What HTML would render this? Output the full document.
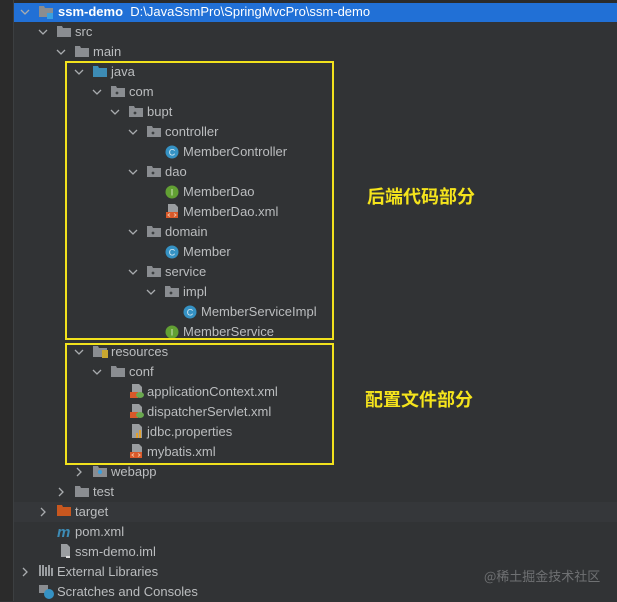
<!DOCTYPE html>
<html><head><meta charset="utf-8"><style>
body{margin:0;width:617px;height:601px;background:#313335;overflow:hidden;position:relative;font-family:"Liberation Sans","Noto Sans CJK SC",sans-serif;font-size:13px;color:#bbbdbf}
.strip{position:absolute;left:0;top:0;width:13px;height:601px;background:#2b2b2b;border-right:1px solid #3c3f41}
.top{position:absolute;left:0;top:0;width:617px;height:3px;background:#2b2b2b}
.sel{position:absolute;left:14px;top:3px;width:603px;height:19px;background:#2170d6}
.hl{position:absolute;left:14px;top:502px;width:603px;height:20px;background:#35373a}
.r{position:absolute;height:20px;line-height:20px;white-space:nowrap}
.box{position:absolute;border:2px solid #f2e21d;box-sizing:border-box}
.lab{position:absolute;color:#f5e41c;font-weight:bold;font-size:18px;line-height:24px;font-family:"Noto Sans CJK SC",sans-serif}
.wm{position:absolute;left:484px;top:566px;color:#6f7173;font-size:13px;font-family:"Noto Sans CJK SC",sans-serif}
</style></head><body>
<div class="top"></div><div class="strip"></div>
<div class="sel"></div><div class="hl"></div>
<svg width="617" height="601" style="position:absolute;left:0;top:0">
<defs>
<g id="dn"><path d="M0 0 L4 4 L8 0" fill="none" stroke="#a9acaf" stroke-width="1.3"/></g>
<g id="rt"><path d="M0 0 L4 4 L0 8" fill="none" stroke="#a9acaf" stroke-width="1.3"/></g>
<g id="fd"><path d="M0 1 h5 l1 2 h8 v9 h-14z" fill="#8a8d91"/></g>
<g id="pk"><path d="M0 1 h5 l1 2 h8 v9 h-14z" fill="#8a8d91"/><circle cx="6" cy="8" r="1.4" fill="#3c3f41"/></g>
<g id="cl"><circle cx="7" cy="7" r="6.5" fill="#3592c4"/><text x="7" y="10.5" font-size="9" text-anchor="middle" fill="#d8e8f0" font-family="Liberation Sans">C</text></g>
<g id="in"><circle cx="7" cy="7" r="6.5" fill="#62a033"/><text x="7" y="10.5" font-size="9" text-anchor="middle" fill="#e0f0d0" font-family="Liberation Sans">I</text></g>
<g id="xm"><path d="M3 0 h7 l3 3 v6 h-10z" fill="#9a9da0"/><rect x="1" y="8" width="12" height="6" fill="#d9592a"/><path d="M5 9.5 l-2 1.5 l2 1.5 M9 9.5 l2 1.5 l-2 1.5" stroke="#f0c0a0" fill="none"/></g>
<g id="sx"><path d="M3 0 h7 l3 3 v6 h-10z" fill="#9a9da0"/><rect x="1" y="8" width="8" height="6" fill="#d9592a"/><ellipse cx="11" cy="11" rx="4" ry="3" fill="#6aa84f"/></g>
</defs>
<use href="#dn" x="21" y="10"/><use href="#dn" x="39" y="30"/><use href="#dn" x="57" y="50"/>
<use href="#dn" x="75" y="70"/><use href="#dn" x="93" y="90"/><use href="#dn" x="111" y="110"/>
<use href="#dn" x="129" y="130"/><use href="#dn" x="129" y="170"/><use href="#dn" x="129" y="230"/>
<use href="#dn" x="129" y="270"/><use href="#dn" x="147" y="290"/>
<use href="#dn" x="75" y="350"/><use href="#dn" x="93" y="370"/>
<use href="#rt" x="77" y="468"/><use href="#rt" x="59" y="488"/><use href="#rt" x="41" y="508"/><use href="#rt" x="23" y="568"/>
<use href="#fd" x="39" y="5"/><rect x="47" y="13" width="6" height="6" fill="#3aa0e0"/>
<use href="#fd" x="57" y="25"/><use href="#fd" x="75" y="45"/>
<path d="M93 66 h5 l1 2 h8 v9 h-14z" fill="#3d8cb6"/>
<use href="#pk" x="111" y="85"/><use href="#pk" x="129" y="105"/><use href="#pk" x="147" y="125"/>
<use href="#cl" x="165" y="145"/>
<use href="#pk" x="147" y="165"/><use href="#in" x="165" y="185"/><use href="#xm" x="165" y="204"/>
<use href="#pk" x="147" y="225"/><use href="#cl" x="165" y="245"/>
<use href="#pk" x="147" y="265"/><use href="#pk" x="165" y="285"/><use href="#cl" x="183" y="305"/><use href="#in" x="165" y="325"/>
<use href="#fd" x="93" y="345"/><rect x="102" y="350" width="6" height="8" fill="#c9a830"/>
<use href="#fd" x="111" y="365"/>
<use href="#sx" x="129" y="384"/><use href="#sx" x="129" y="404"/>
<path d="M132 424 h7 l3 3 v11 h-10z" fill="#9a9da0"/><rect x="136" y="433" width="2" height="5" fill="#e0a030"/><rect x="139" y="430" width="2" height="8" fill="#e0a030"/>
<use href="#xm" x="129" y="444"/>
<use href="#fd" x="93" y="465"/><circle cx="100" cy="472" r="2" fill="#3aa0e0"/>
<use href="#fd" x="75" y="485"/>
<path d="M57 505 h5 l1 2 h8 v9 h-14z" fill="#c8571f"/>
<text x="57" y="537" font-size="15" font-style="italic" font-weight="bold" fill="#3d8cb6" font-family="Liberation Sans">m</text>
<path d="M61 544 h6 l3 3 v10 h-9z" fill="#9a9da0"/><rect x="66" y="556" width="4" height="2" fill="#ddd"/>
<g fill="#9a9da0"><rect x="39" y="565" width="2" height="11"/><rect x="42" y="565" width="2" height="11"/><rect x="45" y="567" width="2" height="9"/><rect x="48" y="565" width="2" height="11"/><rect x="51" y="568" width="2" height="8"/></g>
<rect x="39" y="585" width="9" height="8" fill="#8a8d91"/><circle cx="49" cy="594" r="5" fill="#3592c4"/>
</svg>
<div class="r" style="left:58px;top:2px;color:#fff"><b>ssm-demo</b>&nbsp; D:\JavaSsmPro\SpringMvcPro\ssm-demo</div>
<div class="r" style="left:75px;top:22px">src</div>
<div class="r" style="left:93px;top:42px">main</div>
<div class="r" style="left:111px;top:62px">java</div>
<div class="r" style="left:129px;top:82px">com</div>
<div class="r" style="left:147px;top:102px">bupt</div>
<div class="r" style="left:165px;top:122px">controller</div>
<div class="r" style="left:183px;top:142px">MemberController</div>
<div class="r" style="left:165px;top:162px">dao</div>
<div class="r" style="left:183px;top:182px">MemberDao</div>
<div class="r" style="left:183px;top:202px">MemberDao.xml</div>
<div class="r" style="left:165px;top:222px">domain</div>
<div class="r" style="left:183px;top:242px">Member</div>
<div class="r" style="left:165px;top:262px">service</div>
<div class="r" style="left:183px;top:282px">impl</div>
<div class="r" style="left:201px;top:302px">MemberServiceImpl</div>
<div class="r" style="left:183px;top:322px">MemberService</div>
<div class="r" style="left:111px;top:342px">resources</div>
<div class="r" style="left:129px;top:362px">conf</div>
<div class="r" style="left:147px;top:382px">applicationContext.xml</div>
<div class="r" style="left:147px;top:402px">dispatcherServlet.xml</div>
<div class="r" style="left:147px;top:422px">jdbc.properties</div>
<div class="r" style="left:147px;top:442px">mybatis.xml</div>
<div class="r" style="left:111px;top:462px">webapp</div>
<div class="r" style="left:93px;top:482px">test</div>
<div class="r" style="left:75px;top:502px">target</div>
<div class="r" style="left:75px;top:522px">pom.xml</div>
<div class="r" style="left:75px;top:542px">ssm-demo.iml</div>
<div class="r" style="left:57px;top:562px">External Libraries</div>
<div class="r" style="left:57px;top:582px">Scratches and Consoles</div>
<div class="box" style="left:65px;top:61px;width:269px;height:279px"></div>
<div class="box" style="left:65px;top:343px;width:269px;height:122px"></div>
<div class="lab" style="left:367px;top:184px">后端代码部分</div>
<div class="lab" style="left:365px;top:387px">配置文件部分</div>
<div class="wm">@稀土掘金技术社区</div>
</body></html>
